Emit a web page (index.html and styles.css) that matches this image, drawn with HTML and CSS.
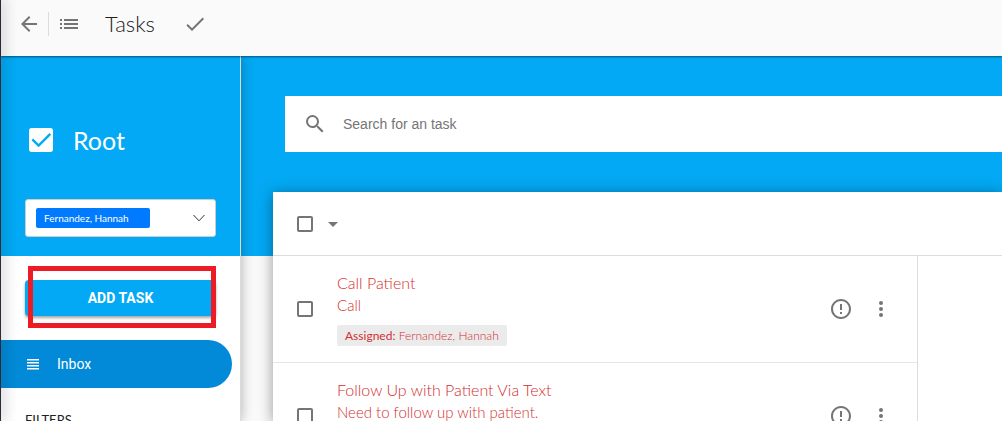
FILE: index.html
```html
<!DOCTYPE html>
<html lang="en">
<head>
    <meta charset="UTF-8">
    <meta name="viewport" content="width=device-width, initial-scale=1.0">
    <title>Tasks</title>
    <link rel="stylesheet" href="styles.css">
</head>
<body>
    <div class="edge"></div>
    <div class="app">
        <header class="topbar">
            <button class="icon-btn" aria-label="Back">
                <svg width="24" height="24" viewBox="0 0 24 24"><path d="M20 11H7.83l5.59-5.59L12 4l-8 8 8 8 1.41-1.41L7.83 13H20v-2z"/></svg>
            </button>
            <span class="divider"></span>
            <button class="icon-btn" aria-label="Menu">
                <svg width="24" height="24" viewBox="0 0 24 24"><path d="M3 7h2v2H3zm0 4h2v2H3zM3 15h2v2H3zM7 7h14v2H7zm0 4h14v2H7zM7 15h14v2H7z"/></svg>
            </button>
            <h1>Tasks</h1>
            <button class="icon-btn" aria-label="Done">
                <svg width="24" height="24" viewBox="0 0 24 24"><path d="M9 16.170 4.830 12l-1.420 1.410L9 19 21 7l-1.410-1.410z"/></svg>
            </button>
        </header>

        <div class="page">
            <aside class="sidebar">
                <div class="sidebar-header">
                    <div class="logo">
                        <svg width="32" height="32" viewBox="0 0 24 24"><path d="M19 3H5a2 2 0 0 0-2 2v14a2 2 0 0 0 2 2h14a2 2 0 0 0 2-2V5a2 2 0 0 0-2-2z"/><path class="tick" d="m5.500 11.500 4.700 4.700L19 7.400"/></svg>
                        <span>Root</span>
                    </div>
                    <label class="account">
                        <select aria-label="Account">
                            <option>Fernandez, Hannah</option>
                        </select>
                        <svg width="12" height="8" viewBox="0 0 12 8"><path d="M.5 1 6 6.800 11.500 1"/></svg>
                    </label>
                </div>
                <div class="add-wrap">
                    <button class="add-task">ADD TASK</button>
                    <div class="highlight"></div>
                </div>
                <a class="nav-item" href="#inbox">
                    <svg width="16" height="16" viewBox="0 0 16 16"><path d="M2 3h12v1.500H2zm0 3h12v1.500H2zm0 3h12v1.500H2zm0 3h12v1.500H2z"/></svg>
                    Inbox
                </a>
                <h2>FILTERS</h2>
            </aside>

            <main class="content">
                <label class="search">
                    <svg width="24" height="24" viewBox="0 0 24 24"><path d="M15.500 14h-.79l-.28-.27A6.471 6.471 0 0 0 16 9.500 6.500 6.500 0 1 0 9.500 16c1.610 0 3.090-.59 4.230-1.570l.27.28v.79l5 4.990L20.490 19l-4.990-5zm-6 0C7.010 14 5 11.990 5 9.500S7.010 5 9.500 5 14 7.010 14 9.500 11.990 14 9.500 14z"/></svg>
                    <input type="text" placeholder="Search for an task" aria-label="Search">
                </label>

                <div class="card">
                    <div class="toolbar">
                        <input type="checkbox" aria-label="Select all">
                        <button class="icon-btn" aria-label="Selection options">
                            <svg width="24" height="24" viewBox="0 0 24 24"><path d="m7 10 5 5 5-5z"/></svg>
                        </button>
                    </div>
                    <div class="card-body">
                        <div class="list">
                            <div class="task">
                                <input type="checkbox" id="task-1">
                                <div class="task-info">
                                    <label for="task-1">Call Patient</label>
                                    <p>Call</p>
                                    <span class="chip"><b>Assigned:</b> Fernandez, Hannah</span>
                                </div>
                                <button class="icon-btn" aria-label="Priority">
                                    <svg width="24" height="24" viewBox="0 0 24 24"><path d="M11 15h2v2h-2zm0-8h2v6h-2zm.99-5C6.470 2 2 6.480 2 12s4.470 10 9.990 10C17.520 22 22 17.520 22 12S17.520 2 11.990 2zM12 20a8 8 0 1 1 0-16 8 8 0 0 1 0 16z"/></svg>
                                </button>
                                <button class="icon-btn" aria-label="More">
                                    <svg width="24" height="24" viewBox="0 0 24 24"><circle cx="12" cy="6" r="2"/><circle cx="12" cy="12" r="2"/><circle cx="12" cy="18" r="2"/></svg>
                                </button>
                            </div>
                            <div class="task">
                                <input type="checkbox" id="task-2">
                                <div class="task-info">
                                    <label for="task-2">Follow Up with Patient Via Text</label>
                                    <p>Need to follow up with patient.</p>
                                </div>
                                <button class="icon-btn" aria-label="Priority">
                                    <svg width="24" height="24" viewBox="0 0 24 24"><path d="M11 15h2v2h-2zm0-8h2v6h-2zm.99-5C6.470 2 2 6.480 2 12s4.470 10 9.990 10C17.520 22 22 17.520 22 12S17.520 2 11.990 2zM12 20a8 8 0 1 1 0-16 8 8 0 0 1 0 16z"/></svg>
                                </button>
                                <button class="icon-btn" aria-label="More">
                                    <svg width="24" height="24" viewBox="0 0 24 24"><circle cx="12" cy="6" r="2"/><circle cx="12" cy="12" r="2"/><circle cx="12" cy="18" r="2"/></svg>
                                </button>
                            </div>
                        </div>
                        <div class="details"></div>
                    </div>
                </div>
            </main>
        </div>
    </div>
</body>
</html>
```
FILE: styles.css
```css
* {
    box-sizing: border-box;
}

body {
    display: flex;
    height: 100vh;
    margin: 0;
    overflow: hidden;
    font-family: Lato, "Open Sans", sans-serif;
    color: #212121;
    background: #fafafa;
}

h1, h2, p {
    margin: 0;
}

svg {
    display: block;
    flex: none;
    fill: #757575;
}

button {
    border: 0;
    cursor: pointer;
}

.edge {
    flex: none;
    width: 1px;
    background: #2b2b38;
    box-shadow: 0 0 14px 2px rgba(0, 0, 0, 0.3);
    z-index: 5;
}

.app {
    display: flex;
    flex-direction: column;
    flex: 1;
    min-width: 0;
}

.icon-btn {
    padding: 0;
    background: none;
}

/* top bar */
.topbar {
    display: flex;
    align-items: center;
    flex: none;
    height: 56px;
    padding: 0 16px 8px;
    background: #fafafa;
    box-shadow: 0 1px 2px rgba(0, 0, 0, 0.5);
    z-index: 3;
}

.divider {
    width: 1px;
    height: 24px;
    margin: 0 8px 0 7px;
    background: #dcdcdc;
}

.topbar h1 {
    margin: 0 28px 0 24px;
    font-size: 22px;
    line-height: 24px;
    font-weight: 300;
}

.page {
    display: flex;
    flex: 1;
    min-height: 0;
}

/* sidebar */
.sidebar {
    flex: none;
    width: 240px;
    border-right: 1px solid #dcdcdc;
    background: #fff;
    box-shadow: 0 0 12px rgba(0, 0, 0, 0.3);
    z-index: 2;
}

.sidebar-header {
    height: 200px;
    padding: 68px 24px 0;
    background: #03a9f4;
}

.logo {
    display: flex;
    align-items: center;
    gap: 16px;
    height: 32px;
    color: #fff;
    font-size: 25px;
}

.logo svg {
    fill: #fff;
}

.logo .tick {
    fill: none;
    stroke: #03a9f4;
    stroke-width: 1.8;
}

.account {
    display: flex;
    align-items: center;
    justify-content: space-between;
    height: 38px;
    margin-top: 43px;
    padding: 0 10px;
    border: 1px solid #ccc;
    border-radius: 3px;
    background: #fff;
}

.account select {
    appearance: none;
    width: 114px;
    height: 20px;
    padding: 0 8px;
    border: 0;
    border-radius: 2px;
    background: #007bff;
    color: #fff;
    font: 10px Lato, sans-serif;
}

.account svg {
    fill: none;
    stroke: #333;
}

.add-wrap {
    position: relative;
    margin: 24px;
}

.add-task {
    display: block;
    width: 100%;
    height: 36px;
    padding-bottom: 2px;
    border-radius: 4px;
    background: #03a9f4;
    box-shadow: 0 2px 3px rgba(0, 0, 0, 0.35);
    color: #fff;
    font: 700 14px/32px Roboto, sans-serif;
}

/* red frame around the button */
.highlight {
    position: absolute;
    top: -14px;
    right: 0;
    bottom: -12px;
    left: 3px;
    border: 5px solid #ed1c24;
    pointer-events: none;
}

.nav-item {
    display: flex;
    align-items: center;
    gap: 16px;
    height: 48px;
    margin-right: 8px;
    padding-left: 24px;
    border-radius: 0 24px 24px 0;
    background: #028ad8;
    color: #fff;
    font: 14px Roboto, sans-serif;
    text-decoration: none;
}

.nav-item svg {
    fill: #fff;
}

.sidebar h2 {
    padding: 24px 24px 0;
    font-size: 13px;
    line-height: 16px;
    font-weight: 400;
}

/* content */
.content {
    display: flex;
    flex-direction: column;
    flex: 1;
    min-width: 0;
    padding: 40px 0 0 32px;
    background: linear-gradient(#03a9f4 200px, #fafafa 200px);
}

.search {
    display: flex;
    align-items: center;
    flex: none;
    gap: 16px;
    height: 56px;
    margin-left: 12px;
    padding-left: 18px;
    background: #fff;
}

.search input {
    flex: 1;
    padding: 0;
    border: 0;
    outline: 0;
    background: none;
    font: 14px "Liberation Sans", Arial, sans-serif;
}

.search input::placeholder {
    color: #757575;
}

.card {
    display: flex;
    flex-direction: column;
    flex: 1;
    min-height: 0;
    margin-top: 40px;
    background: #fff;
    box-shadow: 0 2px 14px rgba(0, 0, 0, 0.4);
}

.toolbar {
    display: flex;
    align-items: center;
    flex: none;
    gap: 8px;
    height: 64px;
    padding-left: 24px;
    border-bottom: 1px solid #dcdcdc;
}

input[type="checkbox"] {
    appearance: none;
    flex: none;
    width: 16px;
    height: 16px;
    margin: 0;
    border: 2px solid #757575;
    border-radius: 2px;
}

.card-body {
    display: flex;
    flex: 1;
    min-height: 0;
}

.list {
    flex: 1;
    overflow: hidden;
}

.details {
    width: 85px;
    border-left: 1px solid #dcdcdc;
}

.task {
    display: flex;
    align-items: center;
    gap: 16px;
    min-height: 107px;
    padding: 15px 24px 16px;
    border-bottom: 1px solid #e6e6e6;
}

.task-info {
    flex: 1;
    align-self: flex-start;
    padding-left: 8px;
    color: #d32f2f;
    font-size: 15px;
    line-height: 23px;
}

.task-info label {
    display: block;
    font-size: 16px;
    font-weight: 300;
}

.task-info p {
    font-weight: 300;
}

.chip {
    display: block;
    width: fit-content;
    margin-top: 8px;
    padding: 0 8px;
    border-radius: 2px;
    background: #ebebeb;
    font-size: 12px;
    line-height: 21px;
    font-weight: 300;
}
```
